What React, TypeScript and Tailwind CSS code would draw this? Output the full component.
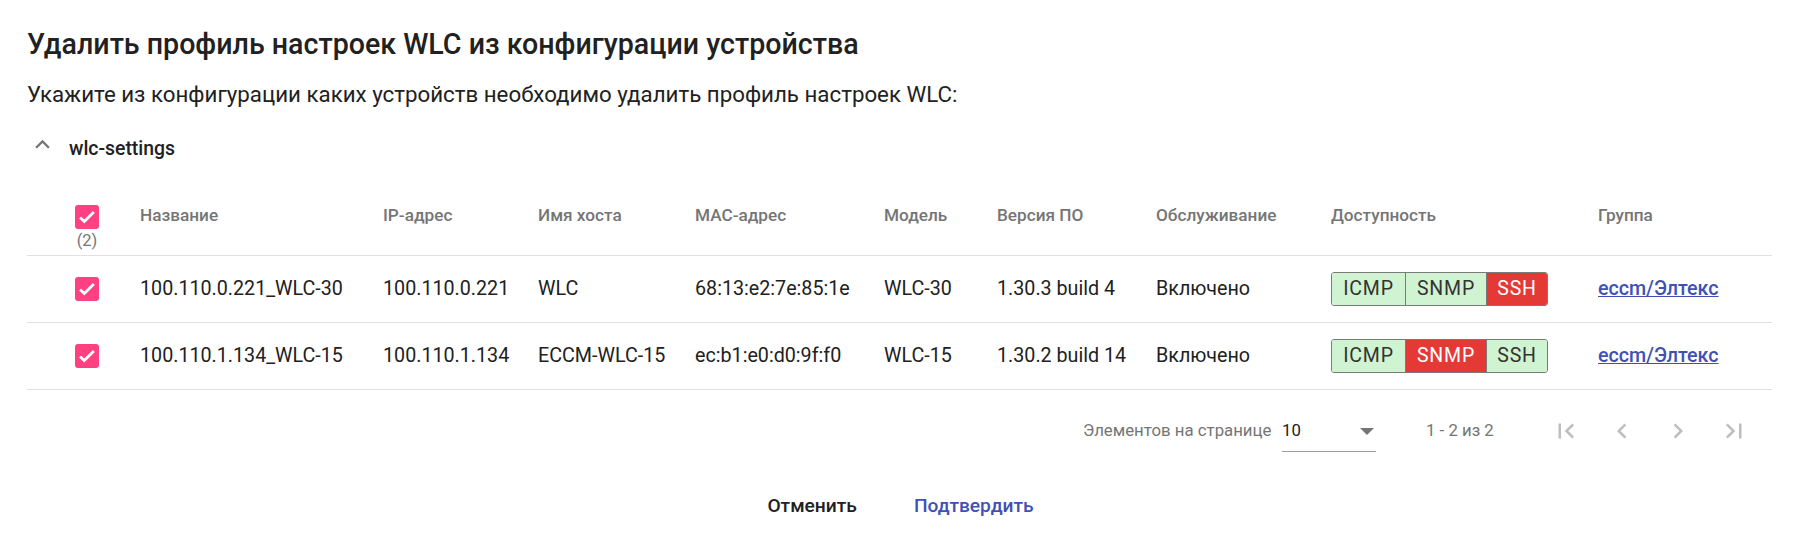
import React from "react"

interface Device {
  name: string
  ip: string
  host: string
  mac: string
  model: string
  version: string
  service: string
  down: string
}

const devices: Device[] = [
  {
    name: "100.110.0.221_WLC-30",
    ip: "100.110.0.221",
    host: "WLC",
    mac: "68:13:e2:7e:85:1e",
    model: "WLC-30",
    version: "1.30.3 build 4",
    service: "Включено",
    down: "SSH",
  },
  {
    name: "100.110.1.134_WLC-15",
    ip: "100.110.1.134",
    host: "ECCM-WLC-15",
    mac: "ec:b1:e0:d0:9f:f0",
    model: "WLC-15",
    version: "1.30.2 build 14",
    service: "Включено",
    down: "SNMP",
  },
]

const cols = "grid grid-cols-[113px_243px_155px_157px_189px_113px_159px_175px_267px_1fr]"

function Checkbox() {
  return (
    <span className="flex h-[24px] w-[24px] items-center justify-center rounded-[3px] bg-[#ff4081]">
      <svg viewBox="0 0 24 24" className="h-[22px] w-[22px]">
        <path d="M4.5 12.5l4.5 4.5L19.5 6.5" fill="none" stroke="white" strokeWidth="3" />
      </svg>
    </span>
  )
}

function Availability({ down }: { down: string }) {
  const parts = [
    { label: "ICMP", w: "w-[73px]" },
    { label: "SNMP", w: "w-[81px]" },
    { label: "SSH", w: "w-[61px]" },
  ]
  return (
    <div className="inline-flex h-[34px] overflow-hidden rounded-[3px] border border-[#7a7a7a] align-middle">
      {parts.map((p, i) => (
        <span
          key={p.label}
          className={`${p.w} flex items-center justify-center text-[19.5px] tracking-[0.8px] ${
            i > 0 ? "border-l border-[#7a7a7a]" : ""
          } ${p.label === down ? "bg-[#e53935] text-white" : "bg-[#d0f3d1] text-[#333]"}`}
        >
          {p.label}
        </span>
      ))}
    </div>
  )
}

function PageIcon({ d }: { d: string }) {
  return (
    <button className="flex h-[48px] w-[48px] items-center justify-center">
      <svg viewBox="0 0 24 24" className="h-[30px] w-[30px] fill-[#bdbdbd]">
        <path d={d} />
      </svg>
    </button>
  )
}

export default function App() {
  return (
    <div className="min-h-screen bg-white pt-[26px] text-[#212121]" style={{ fontFamily: "Roboto, 'Noto Sans', sans-serif" }}>
      <div className="px-[27px]">
        <h1 className="text-[28.6px] font-medium leading-[36px]">Удалить профиль настроек WLC из конфигурации устройства</h1>
        <p className="mt-[18px] text-[22.3px] leading-[28px]">
          Укажите из конфигурации каких устройств необходимо удалить профиль настроек WLC:
        </p>

        <div className="mt-[18px] flex h-[42px] items-center">
          <svg viewBox="0 0 24 24" className="mb-[6px] ml-[1px] h-[29px] w-[29px] fill-[#757575]">
            <path d="M12 8l-6 6 1.41 1.41L12 10.83l4.59 4.58L18 14z" />
          </svg>
          <span className="ml-[12px] mt-[4px] text-[19.4px] font-medium">wlc-settings</span>
        </div>

        <div className="mt-[20px] w-[1745px]">
          <div className={`${cols} h-[68px] border-b border-[#e0e0e0] pt-[17px] text-[17.2px] font-medium text-[#757575]`}>
            <div className="flex w-[24px] flex-col items-center ml-[48px]">
              <Checkbox />
              <span className="mt-[2px] text-[16.5px] font-normal leading-[20px] text-[#757575]">(2)</span>
            </div>
            <div className="leading-[20px]">Название</div>
            <div className="leading-[20px]">IP-адрес</div>
            <div className="leading-[20px]">Имя хоста</div>
            <div className="leading-[20px]">MAC-адрес</div>
            <div className="leading-[20px]">Модель</div>
            <div className="leading-[20px]">Версия ПО</div>
            <div className="leading-[20px]">Обслуживание</div>
            <div className="leading-[20px]">Доступность</div>
            <div className="leading-[20px]">Группа</div>
          </div>

          {devices.map((d) => (
            <div key={d.name} className={`${cols} h-[67px] items-center border-b border-[#e0e0e0] text-[19.7px]`}>
              <div className="ml-[48px]">
                <Checkbox />
              </div>
              <div>{d.name}</div>
              <div>{d.ip}</div>
              <div>{d.host}</div>
              <div>{d.mac}</div>
              <div>{d.model}</div>
              <div>{d.version}</div>
              <div>{d.service}</div>
              <div>
                <Availability down={d.down} />
              </div>
              <div>
                <a href="#" className="font-medium text-[#3f51b5] underline">
                  eccm/Элтекс
                </a>
              </div>
            </div>
          ))}
        </div>
      </div>

      <div className="flex h-[82px] items-center justify-end pr-[43px] text-[16.8px] text-[#757575]">
        <span className="w-[199px]">Элементов на странице</span>
        <div className="flex h-[42px] w-[94px] items-center justify-between border-b border-[#9e9e9e] pt-[1px] text-[#212121]">
          <span>10</span>
          <svg viewBox="0 0 12 6" className="mr-[2px] h-[7px] w-[14px] fill-[#757575]">
            <path d="M0 0h12L6 6z" />
          </svg>
        </div>
        <span className="ml-[50px] w-[116px]">1 - 2 из 2</span>
        <div className="flex gap-[8px]">
          <PageIcon d="M18.41 16.59L13.82 12l4.59-4.59L17 6l-6 6 6 6zM6 6h2v12H6z" />
          <PageIcon d="M15.41 7.41L14 6l-6 6 6 6 1.41-1.41L10.83 12z" />
          <PageIcon d="M10 6L8.59 7.41 13.17 12l-4.58 4.59L10 18l6-6z" />
          <PageIcon d="M5.59 7.41L10.18 12l-4.59 4.59L7 18l6-6-6-6zM16 6h2v12h-2z" />
        </div>
      </div>

      <div className="mt-[12px] flex h-[44px] items-center justify-center gap-[57px] text-[19.2px] font-medium">
        <button className="text-[#212121]">Отменить</button>
        <button className="text-[#3f51b5]">Подтвердить</button>
      </div>
    </div>
  )
}
